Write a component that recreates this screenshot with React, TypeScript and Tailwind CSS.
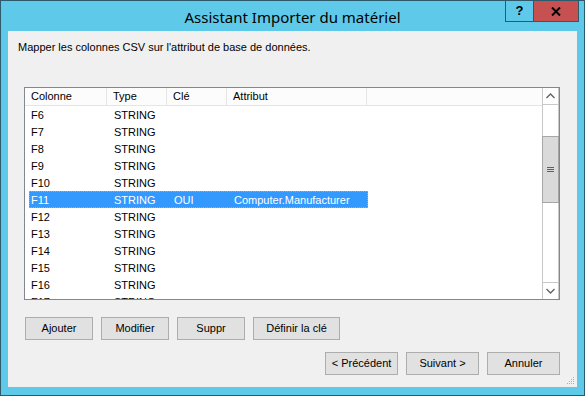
import React from "react";

const rows = [
  { col: "F6", type: "STRING", key: "", attr: "" },
  { col: "F7", type: "STRING", key: "", attr: "" },
  { col: "F8", type: "STRING", key: "", attr: "" },
  { col: "F9", type: "STRING", key: "", attr: "" },
  { col: "F10", type: "STRING", key: "", attr: "" },
  { col: "F11", type: "STRING", key: "OUI", attr: "Computer.Manufacturer", selected: true },
  { col: "F12", type: "STRING", key: "", attr: "" },
  { col: "F13", type: "STRING", key: "", attr: "" },
  { col: "F14", type: "STRING", key: "", attr: "" },
  { col: "F15", type: "STRING", key: "", attr: "" },
  { col: "F16", type: "STRING", key: "", attr: "" },
  { col: "F17", type: "STRING", key: "", attr: "" },
];

function Btn({ label, w = "w-[68px]" }: { label: string; w?: string }) {
  return (
    <button className={`${w} h-[23px] bg-[#e1e1e1] border border-[#adadad] text-[11px] text-black leading-none`}>
      {label}
    </button>
  );
}

export default function App() {
  return (
    <div
      className="w-[585px] h-[396px] bg-[#5fc9ea] border border-[#2e5b6b] flex flex-col overflow-hidden"
      style={{ fontFamily: '"Liberation Sans", Arial, sans-serif' }}
    >
      {/* title bar */}
      <div className="h-[30px] flex items-start relative shrink-0">
        <div
          className="absolute inset-x-0 top-[5px] text-center text-[15px] text-black"
          style={{ fontFamily: '"Noto Sans", "Open Sans", sans-serif' }}
        >
          Assistant Importer du matériel
        </div>
        <div className="ml-auto mr-[5px] flex h-[21px] relative">
          <div className="w-[28px] h-[21px] border border-[#2e5b6b] border-t-0 border-r-0 flex items-center justify-center text-[13px] font-bold text-black">
            ?
          </div>
          <div className="w-[46px] h-[21px] bg-[#c75050] border border-[#2e5b6b] border-t-0 flex items-center justify-center">
            <svg width="10" height="9" viewBox="0 0 10 9">
              <path d="M1 0.5 L9 8.5 M9 0.5 L1 8.5" stroke="#000" strokeWidth="2" />
            </svg>
          </div>
        </div>
      </div>

      {/* client area */}
      <div className="mx-[7px] h-[356px] bg-[#f0f0f0] flex flex-col relative">
        <div className="pl-[10px] pt-[10px] text-[11px] text-black leading-[13px]">
          Mapper les colonnes CSV sur l'attribut de base de données.
        </div>

        {/* list view */}
        <div className="ml-[16px] mt-[33px] w-[536px] h-[213px] border border-[#828790] bg-white flex overflow-hidden">
          <div className="flex-1 flex flex-col overflow-hidden">
            <div className="h-[18px] shrink-0 flex bg-[#fcfcfc] border-b border-[#e5e5e5] text-[11px] text-black">
              <div className="w-[82px] pl-[6px] border-r border-[#e5e5e5] flex items-center">Colonne</div>
              <div className="w-[60px] pl-[6px] border-r border-[#e5e5e5] flex items-center">Type</div>
              <div className="w-[60px] pl-[6px] border-r border-[#e5e5e5] flex items-center">Clé</div>
              <div className="w-[140px] pl-[6px] border-r border-[#e5e5e5] flex items-center">Attribut</div>
            </div>
            <div className="flex flex-col">
              {rows.map((r) => (
                <div key={r.col} className="h-[17px] shrink-0 flex text-[11px] items-center pt-[1px] relative">
                  {r.selected && (
                    <div className="absolute left-[4px] w-[339px] top-0 bottom-0 bg-[#3399ff] border border-dotted border-[#d9a060]" />
                  )}
                  <div className={`relative w-[83px] pl-[6px] ${r.selected ? "text-white" : "text-black"}`}>{r.col}</div>
                  <div className={`relative w-[60px] pl-[6px] ${r.selected ? "text-white" : "text-black"}`}>{r.type}</div>
                  <div className={`relative w-[60px] pl-[6px] ${r.selected ? "text-white" : "text-black"}`}>{r.key}</div>
                  <div className={`relative w-[140px] pl-[6px] ${r.selected ? "text-white" : "text-black"}`}>{r.attr}</div>
                </div>
              ))}
            </div>
          </div>
          {/* scrollbar */}
          <div className="w-[17px] shrink-0 flex flex-col bg-white border-l border-r border-[#c8c8c8]">
            <div className="h-[17px] border-b border-[#c8c8c8] flex items-center justify-center">
              <svg width="9" height="6" viewBox="0 0 9 6">
                <path d="M0.5 5 L4.5 1 L8.5 5" stroke="#606060" strokeWidth="1.3" fill="none" />
              </svg>
            </div>
            <div className="h-[31px]" />
            <div className="h-[67px] bg-[#dadada] border-y border-[#a6a6a6] -mx-[1px] border-x flex flex-col items-center justify-center gap-[1px]">
              <div className="w-[7px] h-[1px] bg-[#606060]" />
              <div className="w-[7px] h-[1px] bg-[#606060]" />
              <div className="w-[7px] h-[1px] bg-[#606060]" />
            </div>
            <div className="flex-1" />
            <div className="h-[17px] border-t border-[#c8c8c8] flex items-center justify-center">
              <svg width="9" height="6" viewBox="0 0 9 6">
                <path d="M0.5 1 L4.5 5 L8.5 1" stroke="#606060" strokeWidth="1.3" fill="none" />
              </svg>
            </div>
          </div>
        </div>

        {/* action buttons */}
        <div className="ml-[17px] mt-[17px] flex gap-[8px]">
          <Btn label="Ajouter" w="w-[68px]" />
          <Btn label="Modifier" w="w-[68px]" />
          <Btn label="Suppr" w="w-[68px]" />
          <Btn label="Définir la clé" w="w-[87px]" />
        </div>

        {/* navigation buttons */}
        <div className="mt-[12px] mr-[17px] flex justify-end gap-[8px]">
          <Btn label="< Précédent" w="w-[73px]" />
          <Btn label="Suivant >" w="w-[73px]" />
          <Btn label="Annuler" w="w-[73px]" />
        </div>

        {/* resize grip */}
        <svg className="absolute right-[2px] bottom-[2px]" width="8" height="8" viewBox="0 0 8 8">
          <rect x="6" y="0" width="1" height="1" fill="#b0b0b0" />
          <rect x="4" y="2" width="1" height="1" fill="#b0b0b0" />
          <rect x="6" y="2" width="1" height="1" fill="#b0b0b0" />
          <rect x="2" y="4" width="1" height="1" fill="#b0b0b0" />
          <rect x="4" y="4" width="1" height="1" fill="#b0b0b0" />
          <rect x="6" y="4" width="1" height="1" fill="#b0b0b0" />
          <rect x="0" y="6" width="1" height="1" fill="#b0b0b0" />
          <rect x="2" y="6" width="1" height="1" fill="#b0b0b0" />
          <rect x="4" y="6" width="1" height="1" fill="#b0b0b0" />
          <rect x="6" y="6" width="1" height="1" fill="#b0b0b0" />
        </svg>
      </div>
    </div>
  );
}
